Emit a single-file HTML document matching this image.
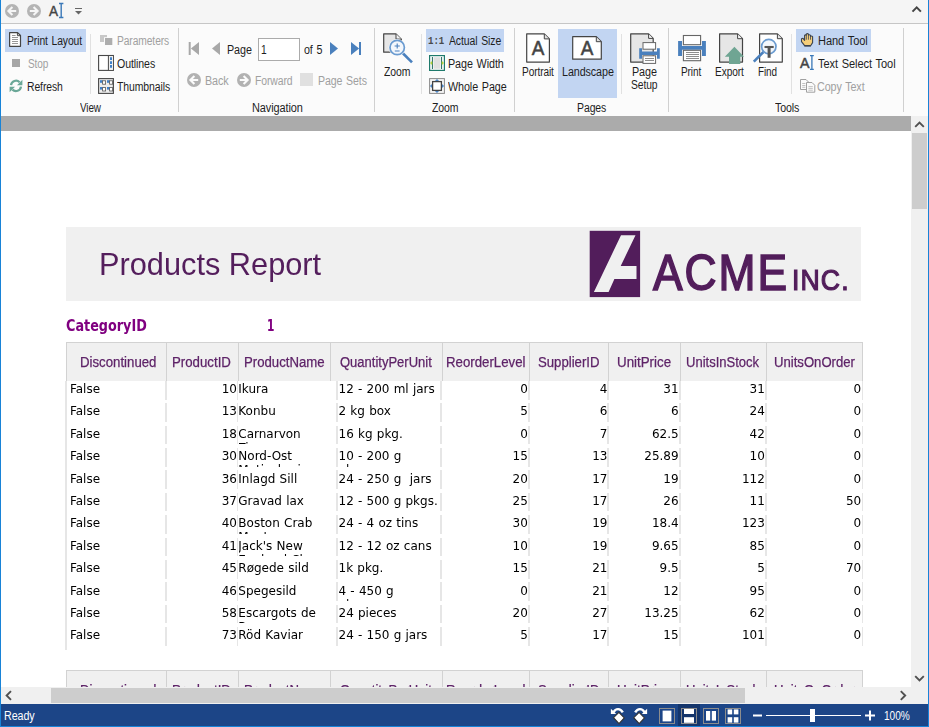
<!DOCTYPE html>
<html lang="en"><head><meta charset="utf-8"><title>Products Report</title>
<style>
*{box-sizing:border-box;margin:0;padding:0}
html,body{width:929px;height:727px;overflow:hidden;background:#fff}
body{font-family:"Liberation Sans",sans-serif;font-size:11px;color:#1e1e1e}
#win{position:absolute;left:0;top:0;width:929px;height:727px;overflow:hidden;background:#fff}
#win div,#win svg,#win span{position:absolute}
.edgeL{left:0;top:0;width:1px;height:727px;background:#1883d7}
.edgeR{left:928px;top:0;width:1px;height:727px;background:#1883d7}
.edgeB{left:0;top:726px;width:929px;height:1px;background:#1883d7}
#title{left:0;top:0;width:929px;height:23px;background:#f5f5f5}
#tline{left:0;top:23px;width:929px;height:1px;background:#c6c6c6}
#ribbon{left:0;top:24px;width:929px;height:92px;background:#fbfbfb}
.t{white-space:nowrap;line-height:14px;color:#1e1e1e;transform-origin:0 0}
.t.g{color:#a0a0a0}
.hl{background:#c2d5f2}
.sep{width:1px;background:#d0d0d0;top:28px;height:84px}
.isep{width:1px;background:#e1e1e1;top:34px;height:60px}
#gbar{left:0;top:116px;width:911px;height:15px;background:#ababab}
#view{left:1px;top:131px;width:910px;height:556px;background:#fff;overflow:hidden}
#page{left:-1px;top:-131px;width:929px;height:727px;will-change:transform}
.band{left:66px;top:227px;width:795px;height:74px;background:#f0f0f0}
.t.ttl{color:#541e5c}
.t.lg{color:#521d5b}
.logo{left:0;top:0}
.t.cat{font-family:"DejaVu Sans Condensed","DejaVu Sans","Liberation Sans",sans-serif;font-weight:bold;color:#800080}
.th{background:#f0f0f0;border:1px solid #d2d2d2;border-bottom:0}
.t.ht{color:#5e2368;-webkit-text-stroke:.25px #5e2368}
.tr{left:0;width:929px;height:18.7px}
.td{top:0;height:18.7px;border-left:1px solid #e6e6e6;border-right:1px solid #e6e6e6;overflow:hidden}
.d{font-family:"DejaVu Sans","Liberation Sans",sans-serif;font-size:12px;line-height:14px;word-spacing:.4px;color:#000;white-space:nowrap}
.tbl{left:65px;top:381px;width:2px;height:268.5px;background:#e6e6e6}
#vsb{left:911px;top:116px;width:17px;height:571px;background:#f0f0f0}
#hsb{left:1px;top:687px;width:910px;height:17px;background:#f0f0f0}
#corner{left:911px;top:687px;width:17px;height:17px;background:#f0f0f0}
.thumb{background:#cdcdcd}
#status{left:0;top:704px;width:929px;height:23px;background:#1c4587}
.t.wh{color:#fff}
svg{overflow:visible}

</style></head>
<body>
<div id="win">
<div id="view">
<div id="page">
<div class="band"></div>
<div class="t ttl" style="left:98.88px;top:245.00px;letter-spacing:0px;word-spacing:0px;font-size:31.5px;line-height:38px;transform:scaleX(0.9759);">Products Report</div>
<svg style="left:589px;top:230px" width="52" height="68" viewBox="589 230 52 68"><rect x="589.7" y="230.8" width="50.4" height="66.3" fill="#521d5b"/><path d="M621 235.3H635.5L620.7 265.9H636.5V279H614.4L608.6 292.1H593.9Z" fill="#f0f0f0"/></svg>
<div class="logo"><div class="t lg" style="left:652.71px;top:241.60px;letter-spacing:2.2px;word-spacing:0px;font-size:50.6px;line-height:61px;transform:scaleX(0.8774);-webkit-text-stroke:1.6px #521d5b">ACME</div><div class="t lg" style="left:791.55px;top:261.70px;letter-spacing:1.2px;word-spacing:0px;font-size:29.3px;line-height:35px;transform:scaleX(0.9096);-webkit-text-stroke:1.2px #521d5b">INC.</div></div>
<div class="t cat" style="left:65.67px;top:317.00px;letter-spacing:0px;word-spacing:0px;font-size:15px;line-height:18px;transform:scaleX(0.9478);">CategoryID</div>
<div class="t cat" style="left:266.80px;top:317.00px;letter-spacing:0px;word-spacing:0px;font-size:15px;line-height:18px;transform:scaleX(0.7902);">1</div>
<div class="tbl"></div>

<div class="th" style="left:66px;top:341.5px;width:101px;height:39px"></div>
<div class="th" style="left:166px;top:341.5px;width:73px;height:39px"></div>
<div class="th" style="left:238px;top:341.5px;width:93px;height:39px"></div>
<div class="th" style="left:330px;top:341.5px;width:113px;height:39px"></div>
<div class="th" style="left:442px;top:341.5px;width:88px;height:39px"></div>
<div class="th" style="left:529px;top:341.5px;width:80px;height:39px"></div>
<div class="th" style="left:608px;top:341.5px;width:73px;height:39px"></div>
<div class="th" style="left:680px;top:341.5px;width:87px;height:39px"></div>
<div class="th" style="left:766px;top:341.5px;width:97px;height:39px"></div>
<div class="t ht" style="left:79.82px;top:354.20px;letter-spacing:0px;word-spacing:0px;font-size:14px;line-height:16px;transform:scaleX(0.9444);">Discontinued</div>
<div class="t ht" style="left:172.41px;top:354.20px;letter-spacing:0px;word-spacing:0px;font-size:14px;line-height:16px;transform:scaleX(0.9464);">ProductID</div>
<div class="t ht" style="left:243.52px;top:354.20px;letter-spacing:0px;word-spacing:0px;font-size:14px;line-height:16px;transform:scaleX(0.9424);">ProductName</div>
<div class="t ht" style="left:340.29px;top:354.20px;letter-spacing:0px;word-spacing:0px;font-size:14px;line-height:16px;transform:scaleX(0.9289);">QuantityPerUnit</div>
<div class="t ht" style="left:445.71px;top:354.20px;letter-spacing:0px;word-spacing:0px;font-size:14px;line-height:16px;transform:scaleX(0.9455);">ReorderLevel</div>
<div class="t ht" style="left:538.11px;top:354.20px;letter-spacing:0px;word-spacing:0px;font-size:14px;line-height:16px;transform:scaleX(0.9410);">SupplierID</div>
<div class="t ht" style="left:616.97px;top:354.20px;letter-spacing:0px;word-spacing:0px;font-size:14px;line-height:16px;transform:scaleX(0.9527);">UnitPrice</div>
<div class="t ht" style="left:685.80px;top:354.20px;letter-spacing:0px;word-spacing:0px;font-size:14px;line-height:16px;transform:scaleX(0.9299);">UnitsInStock</div>
<div class="t ht" style="left:773.79px;top:354.20px;letter-spacing:0px;word-spacing:0px;font-size:14px;line-height:16px;transform:scaleX(0.9371);">UnitsOnOrder</div>
<div class="tr" style="top:381.00px">
<div class="td" style="left:66px;width:100px"><span class="d" style="left:2.90px;top:1.02px">False</span></div>
<div class="td" style="left:166px;width:72px"><span class="d" style="left:54.73px;top:1.02px">10</span></div>
<div class="td" style="left:238px;width:99px;border-left-color:transparent"><span class="d" style="left:-0.70px;top:1.02px">Ikura</span></div>
<div class="td" style="left:337px;width:104px"><span class="d" style="left:0.50px;top:1.02px">12 - 200 ml jars</span></div>
<div class="td" style="left:441px;width:88px"><span class="d" style="left:78.17px;top:1.02px">0</span></div>
<div class="td" style="left:529px;width:79px"><span class="d" style="left:69.87px;top:1.02px">4</span></div>
<div class="td" style="left:608px;width:72px"><span class="d" style="left:54.33px;top:1.02px">31</span></div>
<div class="td" style="left:680px;width:86px"><span class="d" style="left:68.53px;top:1.02px">31</span></div>
<div class="td" style="left:766px;width:96.5px"><span class="d" style="left:86.57px;top:1.02px">0</span></div>
</div>
<div class="tr" style="top:403.36px">
<div class="td" style="left:66px;width:100px"><span class="d" style="left:2.90px;top:0.66px">False</span></div>
<div class="td" style="left:166px;width:72px"><span class="d" style="left:54.73px;top:0.66px">13</span></div>
<div class="td" style="left:238px;width:99px;border-left-color:transparent"><span class="d" style="left:-0.70px;top:0.66px">Konbu</span></div>
<div class="td" style="left:337px;width:104px"><span class="d" style="left:0.50px;top:0.66px">2 kg box</span></div>
<div class="td" style="left:441px;width:88px"><span class="d" style="left:78.17px;top:0.66px">5</span></div>
<div class="td" style="left:529px;width:79px"><span class="d" style="left:69.87px;top:0.66px">6</span></div>
<div class="td" style="left:608px;width:72px"><span class="d" style="left:61.97px;top:0.66px">6</span></div>
<div class="td" style="left:680px;width:86px"><span class="d" style="left:68.53px;top:0.66px">24</span></div>
<div class="td" style="left:766px;width:96.5px"><span class="d" style="left:86.57px;top:0.66px">0</span></div>
</div>
<div class="tr" style="top:425.72px">
<div class="td" style="left:66px;width:100px"><span class="d" style="left:2.90px;top:1.30px">False</span></div>
<div class="td" style="left:166px;width:72px"><span class="d" style="left:54.73px;top:1.30px">18</span></div>
<div class="td" style="left:238px;width:99px;border-left-color:transparent"><span class="d" style="left:-0.70px;top:1.30px">Carnarvon</span><span class="d" style="left:-0.70px;top:15.30px">Tigers</span></div>
<div class="td" style="left:337px;width:104px"><span class="d" style="left:0.50px;top:1.30px">16 kg pkg.</span></div>
<div class="td" style="left:441px;width:88px"><span class="d" style="left:78.17px;top:1.30px">0</span></div>
<div class="td" style="left:529px;width:79px"><span class="d" style="left:69.87px;top:1.30px">7</span></div>
<div class="td" style="left:608px;width:72px"><span class="d" style="left:42.88px;top:1.30px">62.5</span></div>
<div class="td" style="left:680px;width:86px"><span class="d" style="left:68.53px;top:1.30px">42</span></div>
<div class="td" style="left:766px;width:96.5px"><span class="d" style="left:86.57px;top:1.30px">0</span></div>
</div>
<div class="tr" style="top:448.08px">
<div class="td" style="left:66px;width:100px"><span class="d" style="left:2.90px;top:0.94px">False</span></div>
<div class="td" style="left:166px;width:72px"><span class="d" style="left:54.73px;top:0.94px">30</span></div>
<div class="td" style="left:238px;width:99px;border-left-color:transparent"><span class="d" style="left:-0.70px;top:0.94px">Nord-Ost</span><span class="d" style="left:-0.70px;top:14.94px">Matjeshering</span></div>
<div class="td" style="left:337px;width:104px"><span class="d" style="left:0.50px;top:0.94px">10 - 200 g</span><span class="d" style="left:0.50px;top:14.94px">glasses</span></div>
<div class="td" style="left:441px;width:88px"><span class="d" style="left:70.53px;top:0.94px">15</span></div>
<div class="td" style="left:529px;width:79px"><span class="d" style="left:62.23px;top:0.94px">13</span></div>
<div class="td" style="left:608px;width:72px"><span class="d" style="left:35.25px;top:0.94px">25.89</span></div>
<div class="td" style="left:680px;width:86px"><span class="d" style="left:68.53px;top:0.94px">10</span></div>
<div class="td" style="left:766px;width:96.5px"><span class="d" style="left:86.57px;top:0.94px">0</span></div>
</div>
<div class="tr" style="top:470.44px">
<div class="td" style="left:66px;width:100px"><span class="d" style="left:2.90px;top:1.58px">False</span></div>
<div class="td" style="left:166px;width:72px"><span class="d" style="left:54.73px;top:1.58px">36</span></div>
<div class="td" style="left:238px;width:99px;border-left-color:transparent"><span class="d" style="left:-0.70px;top:1.58px">Inlagd Sill</span></div>
<div class="td" style="left:337px;width:104px"><span class="d" style="left:0.50px;top:1.58px">24 - 250 g &nbsp;jars</span></div>
<div class="td" style="left:441px;width:88px"><span class="d" style="left:70.53px;top:1.58px">20</span></div>
<div class="td" style="left:529px;width:79px"><span class="d" style="left:62.23px;top:1.58px">17</span></div>
<div class="td" style="left:608px;width:72px"><span class="d" style="left:54.33px;top:1.58px">19</span></div>
<div class="td" style="left:680px;width:86px"><span class="d" style="left:60.90px;top:1.58px">112</span></div>
<div class="td" style="left:766px;width:96.5px"><span class="d" style="left:86.57px;top:1.58px">0</span></div>
</div>
<div class="tr" style="top:492.80px">
<div class="td" style="left:66px;width:100px"><span class="d" style="left:2.90px;top:1.22px">False</span></div>
<div class="td" style="left:166px;width:72px"><span class="d" style="left:54.73px;top:1.22px">37</span></div>
<div class="td" style="left:238px;width:99px;border-left-color:transparent"><span class="d" style="left:-0.70px;top:1.22px">Gravad lax</span></div>
<div class="td" style="left:337px;width:104px"><span class="d" style="left:0.50px;top:1.22px">12 - 500 g pkgs.</span></div>
<div class="td" style="left:441px;width:88px"><span class="d" style="left:70.53px;top:1.22px">25</span></div>
<div class="td" style="left:529px;width:79px"><span class="d" style="left:62.23px;top:1.22px">17</span></div>
<div class="td" style="left:608px;width:72px"><span class="d" style="left:54.33px;top:1.22px">26</span></div>
<div class="td" style="left:680px;width:86px"><span class="d" style="left:68.53px;top:1.22px">11</span></div>
<div class="td" style="left:766px;width:96.5px"><span class="d" style="left:78.93px;top:1.22px">50</span></div>
</div>
<div class="tr" style="top:515.16px">
<div class="td" style="left:66px;width:100px"><span class="d" style="left:2.90px;top:0.86px">False</span></div>
<div class="td" style="left:166px;width:72px"><span class="d" style="left:54.73px;top:0.86px">40</span></div>
<div class="td" style="left:238px;width:99px;border-left-color:transparent"><span class="d" style="left:-0.70px;top:0.86px">Boston Crab</span><span class="d" style="left:-0.70px;top:14.86px">Meat</span></div>
<div class="td" style="left:337px;width:104px"><span class="d" style="left:0.50px;top:0.86px">24 - 4 oz tins</span></div>
<div class="td" style="left:441px;width:88px"><span class="d" style="left:70.53px;top:0.86px">30</span></div>
<div class="td" style="left:529px;width:79px"><span class="d" style="left:62.23px;top:0.86px">19</span></div>
<div class="td" style="left:608px;width:72px"><span class="d" style="left:42.88px;top:0.86px">18.4</span></div>
<div class="td" style="left:680px;width:86px"><span class="d" style="left:60.90px;top:0.86px">123</span></div>
<div class="td" style="left:766px;width:96.5px"><span class="d" style="left:86.57px;top:0.86px">0</span></div>
</div>
<div class="tr" style="top:537.52px">
<div class="td" style="left:66px;width:100px"><span class="d" style="left:2.90px;top:1.50px">False</span></div>
<div class="td" style="left:166px;width:72px"><span class="d" style="left:54.73px;top:1.50px">41</span></div>
<div class="td" style="left:238px;width:99px;border-left-color:transparent"><span class="d" style="left:-0.70px;top:1.50px">Jack's New</span><span class="d" style="left:-0.70px;top:15.50px">England Clam</span></div>
<div class="td" style="left:337px;width:104px"><span class="d" style="left:0.50px;top:1.50px">12 - 12 oz cans</span></div>
<div class="td" style="left:441px;width:88px"><span class="d" style="left:70.53px;top:1.50px">10</span></div>
<div class="td" style="left:529px;width:79px"><span class="d" style="left:62.23px;top:1.50px">19</span></div>
<div class="td" style="left:608px;width:72px"><span class="d" style="left:42.88px;top:1.50px">9.65</span></div>
<div class="td" style="left:680px;width:86px"><span class="d" style="left:68.53px;top:1.50px">85</span></div>
<div class="td" style="left:766px;width:96.5px"><span class="d" style="left:86.57px;top:1.50px">0</span></div>
</div>
<div class="tr" style="top:559.88px">
<div class="td" style="left:66px;width:100px"><span class="d" style="left:2.90px;top:1.14px">False</span></div>
<div class="td" style="left:166px;width:72px"><span class="d" style="left:54.73px;top:1.14px">45</span></div>
<div class="td" style="left:238px;width:99px;border-left-color:transparent"><span class="d" style="left:-0.70px;top:1.14px">Røgede sild</span></div>
<div class="td" style="left:337px;width:104px"><span class="d" style="left:0.50px;top:1.14px">1k pkg.</span></div>
<div class="td" style="left:441px;width:88px"><span class="d" style="left:70.53px;top:1.14px">15</span></div>
<div class="td" style="left:529px;width:79px"><span class="d" style="left:62.23px;top:1.14px">21</span></div>
<div class="td" style="left:608px;width:72px"><span class="d" style="left:50.52px;top:1.14px">9.5</span></div>
<div class="td" style="left:680px;width:86px"><span class="d" style="left:76.17px;top:1.14px">5</span></div>
<div class="td" style="left:766px;width:96.5px"><span class="d" style="left:78.93px;top:1.14px">70</span></div>
</div>
<div class="tr" style="top:582.24px">
<div class="td" style="left:66px;width:100px"><span class="d" style="left:2.90px;top:1.78px">False</span></div>
<div class="td" style="left:166px;width:72px"><span class="d" style="left:54.73px;top:1.78px">46</span></div>
<div class="td" style="left:238px;width:99px;border-left-color:transparent"><span class="d" style="left:-0.70px;top:1.78px">Spegesild</span></div>
<div class="td" style="left:337px;width:104px"><span class="d" style="left:0.50px;top:1.78px">4 - 450 g</span><span class="d" style="left:0.50px;top:15.78px">glasses</span></div>
<div class="td" style="left:441px;width:88px"><span class="d" style="left:78.17px;top:1.78px">0</span></div>
<div class="td" style="left:529px;width:79px"><span class="d" style="left:62.23px;top:1.78px">21</span></div>
<div class="td" style="left:608px;width:72px"><span class="d" style="left:54.33px;top:1.78px">12</span></div>
<div class="td" style="left:680px;width:86px"><span class="d" style="left:68.53px;top:1.78px">95</span></div>
<div class="td" style="left:766px;width:96.5px"><span class="d" style="left:86.57px;top:1.78px">0</span></div>
</div>
<div class="tr" style="top:604.60px">
<div class="td" style="left:66px;width:100px"><span class="d" style="left:2.90px;top:1.42px">False</span></div>
<div class="td" style="left:166px;width:72px"><span class="d" style="left:54.73px;top:1.42px">58</span></div>
<div class="td" style="left:238px;width:99px;border-left-color:transparent"><span class="d" style="left:-0.70px;top:1.42px">Escargots de</span><span class="d" style="left:-0.70px;top:15.42px">Bourgogne</span></div>
<div class="td" style="left:337px;width:104px"><span class="d" style="left:0.50px;top:1.42px">24 pieces</span></div>
<div class="td" style="left:441px;width:88px"><span class="d" style="left:70.53px;top:1.42px">20</span></div>
<div class="td" style="left:529px;width:79px"><span class="d" style="left:62.23px;top:1.42px">27</span></div>
<div class="td" style="left:608px;width:72px"><span class="d" style="left:35.25px;top:1.42px">13.25</span></div>
<div class="td" style="left:680px;width:86px"><span class="d" style="left:68.53px;top:1.42px">62</span></div>
<div class="td" style="left:766px;width:96.5px"><span class="d" style="left:86.57px;top:1.42px">0</span></div>
</div>
<div class="tr" style="top:626.96px">
<div class="td" style="left:66px;width:100px"><span class="d" style="left:2.90px;top:1.06px">False</span></div>
<div class="td" style="left:166px;width:72px"><span class="d" style="left:54.73px;top:1.06px">73</span></div>
<div class="td" style="left:238px;width:99px;border-left-color:transparent"><span class="d" style="left:-0.70px;top:1.06px">Röd Kaviar</span></div>
<div class="td" style="left:337px;width:104px"><span class="d" style="left:0.50px;top:1.06px">24 - 150 g jars</span></div>
<div class="td" style="left:441px;width:88px"><span class="d" style="left:78.17px;top:1.06px">5</span></div>
<div class="td" style="left:529px;width:79px"><span class="d" style="left:62.23px;top:1.06px">17</span></div>
<div class="td" style="left:608px;width:72px"><span class="d" style="left:54.33px;top:1.06px">15</span></div>
<div class="td" style="left:680px;width:86px"><span class="d" style="left:60.90px;top:1.06px">101</span></div>
<div class="td" style="left:766px;width:96.5px"><span class="d" style="left:86.57px;top:1.06px">0</span></div>
</div>
<div class="th" style="left:66px;top:669.7px;width:101px;height:39px"></div>
<div class="th" style="left:166px;top:669.7px;width:73px;height:39px"></div>
<div class="th" style="left:238px;top:669.7px;width:93px;height:39px"></div>
<div class="th" style="left:330px;top:669.7px;width:113px;height:39px"></div>
<div class="th" style="left:442px;top:669.7px;width:88px;height:39px"></div>
<div class="th" style="left:529px;top:669.7px;width:80px;height:39px"></div>
<div class="th" style="left:608px;top:669.7px;width:73px;height:39px"></div>
<div class="th" style="left:680px;top:669.7px;width:87px;height:39px"></div>
<div class="th" style="left:766px;top:669.7px;width:97px;height:39px"></div>
<div class="t ht" style="left:79.82px;top:682.40px;letter-spacing:0px;word-spacing:0px;font-size:14px;line-height:16px;transform:scaleX(0.9444);">Discontinued</div>
<div class="t ht" style="left:172.41px;top:682.40px;letter-spacing:0px;word-spacing:0px;font-size:14px;line-height:16px;transform:scaleX(0.9464);">ProductID</div>
<div class="t ht" style="left:243.52px;top:682.40px;letter-spacing:0px;word-spacing:0px;font-size:14px;line-height:16px;transform:scaleX(0.9424);">ProductName</div>
<div class="t ht" style="left:340.29px;top:682.40px;letter-spacing:0px;word-spacing:0px;font-size:14px;line-height:16px;transform:scaleX(0.9289);">QuantityPerUnit</div>
<div class="t ht" style="left:445.71px;top:682.40px;letter-spacing:0px;word-spacing:0px;font-size:14px;line-height:16px;transform:scaleX(0.9455);">ReorderLevel</div>
<div class="t ht" style="left:538.11px;top:682.40px;letter-spacing:0px;word-spacing:0px;font-size:14px;line-height:16px;transform:scaleX(0.9410);">SupplierID</div>
<div class="t ht" style="left:616.97px;top:682.40px;letter-spacing:0px;word-spacing:0px;font-size:14px;line-height:16px;transform:scaleX(0.9527);">UnitPrice</div>
<div class="t ht" style="left:685.80px;top:682.40px;letter-spacing:0px;word-spacing:0px;font-size:14px;line-height:16px;transform:scaleX(0.9299);">UnitsInStock</div>
<div class="t ht" style="left:773.79px;top:682.40px;letter-spacing:0px;word-spacing:0px;font-size:14px;line-height:16px;transform:scaleX(0.9371);">UnitsOnOrder</div>
</div>
</div>
<div id="title"></div>
<div id="tline"></div>
<div id="ribbon"></div>
<div id="gbar"></div>
<!-- title bar -->
<svg style="left:5px;top:4px" width="14" height="14" viewBox="0 0 14 14"><circle cx="7" cy="7" r="7" fill="#b4b4b4"/><path d="M7.4 3 L3.4 7 L7.4 11 M3.8 7 H11.2" fill="none" stroke="#f5f5f5" stroke-width="2.1"/></svg>
<svg style="left:27px;top:4px" width="14" height="14" viewBox="0 0 14 14"><circle cx="7" cy="7" r="7" fill="#b4b4b4"/><path d="M6.6 3 L10.6 7 L6.6 11 M10.2 7 H2.8" fill="none" stroke="#f5f5f5" stroke-width="2.1"/></svg>
<div class="t k" style="left:49.27px;top:1.50px;letter-spacing:0px;word-spacing:1.0px;font-size:15px;line-height:18px;transform:scaleX(0.9050);color:#444;-webkit-text-stroke:.4px #444">A</div>
<svg style="left:59px;top:3px" width="5" height="15" viewBox="0 0 5 15"><path d="M0 .5H4.4M0 14.5H4.4M2.2 0V15" fill="none" stroke="#3a78b8" stroke-width="1.4"/></svg>
<div style="left:75px;top:8px;width:7px;height:1px;background:#666"></div>
<svg style="left:75px;top:11px" width="7" height="4" viewBox="0 0 7 4"><path d="M0 0H7L3.5 3.5Z" fill="#666"/></svg>
<svg style="left:910px;top:4px" width="14" height="12" viewBox="910 4 14 12"><path d="M912.5 11.6L916.7 7.4L920.9 11.6" fill="none" stroke="#444" stroke-width="2"/></svg>
<!-- View -->
<div class="hl" style="left:5px;top:29px;width:81px;height:23px"></div>
<div class="t " style="left:27.15px;top:34.00px;letter-spacing:-0.1px;word-spacing:1.0px;font-size:12px;line-height:14px;transform:scaleX(0.8620);">Print Layout</div>
<div class="t g" style="left:27.55px;top:57.00px;letter-spacing:-0.1px;word-spacing:1.0px;font-size:12px;line-height:14px;transform:scaleX(0.8350);">Stop</div>
<div class="t " style="left:27.45px;top:80.00px;letter-spacing:-0.1px;word-spacing:1.0px;font-size:12px;line-height:14px;transform:scaleX(0.8649);">Refresh</div>
<div class="isep" style="left:90px"></div>
<div class="t g" style="left:117.36px;top:34.00px;letter-spacing:-0.1px;word-spacing:1.0px;font-size:12px;line-height:14px;transform:scaleX(0.8541);">Parameters</div>
<div class="t " style="left:116.50px;top:57.00px;letter-spacing:-0.1px;word-spacing:1.0px;font-size:12px;line-height:14px;transform:scaleX(0.8814);">Outlines</div>
<div class="t " style="left:116.87px;top:80.00px;letter-spacing:-0.1px;word-spacing:1.0px;font-size:12px;line-height:14px;transform:scaleX(0.8687);">Thumbnails</div>
<div class="t " style="left:79.96px;top:101.00px;letter-spacing:-0.1px;word-spacing:1.0px;font-size:12px;line-height:14px;transform:scaleX(0.8243);">View</div>
<div class="sep" style="left:178px"></div>
<!-- Navigation -->
<div class="t " style="left:227.02px;top:43.00px;letter-spacing:-0.1px;word-spacing:1.0px;font-size:12px;line-height:14px;transform:scaleX(0.8967);">Page</div>
<div style="left:258px;top:38px;width:42px;height:23px;background:#fff;border:1px solid #ababab"></div>
<div class="t " style="left:261.43px;top:43.00px;letter-spacing:-0.1px;word-spacing:1.0px;font-size:12px;line-height:14px;transform:scaleX(0.8488);">1</div>
<div class="t " style="left:303.95px;top:43.00px;letter-spacing:-0.1px;word-spacing:1.0px;font-size:12px;line-height:14px;transform:scaleX(0.8925);">of 5</div>
<div class="t g" style="left:205.32px;top:74.00px;letter-spacing:-0.1px;word-spacing:1.0px;font-size:12px;line-height:14px;transform:scaleX(0.8971);">Back</div>
<div class="t g" style="left:255.05px;top:74.00px;letter-spacing:-0.1px;word-spacing:1.0px;font-size:12px;line-height:14px;transform:scaleX(0.8667);">Forward</div>
<div class="t g" style="left:317.73px;top:74.00px;letter-spacing:-0.1px;word-spacing:1.0px;font-size:12px;line-height:14px;transform:scaleX(0.8809);">Page Sets</div>
<div class="t " style="left:252.20px;top:101.00px;letter-spacing:-0.1px;word-spacing:1.0px;font-size:12px;line-height:14px;transform:scaleX(0.9122);">Navigation</div>
<div class="sep" style="left:374px"></div>
<!-- Zoom -->
<div class="t " style="left:384.48px;top:65.00px;letter-spacing:-0.1px;word-spacing:1.0px;font-size:12px;line-height:14px;transform:scaleX(0.8693);">Zoom</div>
<div class="isep" style="left:421px"></div>
<div class="hl" style="left:426px;top:29px;width:78px;height:23px"></div>
<div class="t k" style="left:428.29px;top:34.00px;letter-spacing:0px;word-spacing:1.0px;font-size:10.6px;line-height:14px;transform:scaleX(0.8536);font-family:&quot;Liberation Mono&quot;,monospace;font-weight:bold;color:#484848">1:1</div>
<div class="t " style="left:448.68px;top:34.00px;letter-spacing:-0.1px;word-spacing:1.0px;font-size:12px;line-height:14px;transform:scaleX(0.8693);">Actual Size</div>
<div class="t " style="left:448.02px;top:57.00px;letter-spacing:-0.1px;word-spacing:1.0px;font-size:12px;line-height:14px;transform:scaleX(0.8977);">Page Width</div>
<div class="t " style="left:448.36px;top:80.00px;letter-spacing:-0.1px;word-spacing:1.0px;font-size:12px;line-height:14px;transform:scaleX(0.8968);">Whole Page</div>
<div class="t " style="left:432.38px;top:101.00px;letter-spacing:-0.1px;word-spacing:1.0px;font-size:12px;line-height:14px;transform:scaleX(0.8727);">Zoom</div>
<div class="sep" style="left:514px"></div>
<!-- Pages -->
<div class="t " style="left:522.37px;top:65.00px;letter-spacing:-0.1px;word-spacing:1.0px;font-size:12px;line-height:14px;transform:scaleX(0.8399);">Portrait</div>
<div class="hl" style="left:558px;top:29px;width:59px;height:69px"></div>
<div class="t " style="left:561.52px;top:65.00px;letter-spacing:-0.1px;word-spacing:1.0px;font-size:12px;line-height:14px;transform:scaleX(0.8953);">Landscape</div>
<div class="isep" style="left:621px"></div>
<div class="t " style="left:631.91px;top:65.00px;letter-spacing:-0.1px;word-spacing:1.0px;font-size:12px;line-height:14px;transform:scaleX(0.9005);">Page</div>
<div class="t " style="left:631.34px;top:78.00px;letter-spacing:-0.1px;word-spacing:1.0px;font-size:12px;line-height:14px;transform:scaleX(0.8588);">Setup</div>
<div class="t " style="left:577.24px;top:101.00px;letter-spacing:-0.1px;word-spacing:1.0px;font-size:12px;line-height:14px;transform:scaleX(0.8726);">Pages</div>
<div class="sep" style="left:668px"></div>
<!-- Tools -->
<div class="t " style="left:681.18px;top:65.00px;letter-spacing:-0.1px;word-spacing:1.0px;font-size:12px;line-height:14px;transform:scaleX(0.8318);">Print</div>
<div class="t " style="left:715.37px;top:65.00px;letter-spacing:-0.1px;word-spacing:1.0px;font-size:12px;line-height:14px;transform:scaleX(0.8426);">Export</div>
<div class="t " style="left:758.49px;top:65.00px;letter-spacing:-0.1px;word-spacing:1.0px;font-size:12px;line-height:14px;transform:scaleX(0.8268);">Find</div>
<div class="isep" style="left:791px"></div>
<div class="hl" style="left:796px;top:29px;width:75px;height:23px"></div>
<div class="t " style="left:818.29px;top:34.00px;letter-spacing:-0.1px;word-spacing:1.0px;font-size:12px;line-height:14px;transform:scaleX(0.9207);">Hand Tool</div>
<div class="t " style="left:818.06px;top:57.00px;letter-spacing:-0.1px;word-spacing:1.0px;font-size:12px;line-height:14px;transform:scaleX(0.9200);">Text Select Tool</div>
<div class="t g" style="left:817.46px;top:80.00px;letter-spacing:-0.1px;word-spacing:1.0px;font-size:12px;line-height:14px;transform:scaleX(0.8927);">Copy Text</div>
<div class="t " style="left:775.37px;top:101.00px;letter-spacing:-0.1px;word-spacing:1.0px;font-size:12px;line-height:14px;transform:scaleX(0.8844);">Tools</div>
<div class="sep" style="left:903px"></div>
<svg style="left:0;top:0" width="929" height="116" viewBox="0 0 929 116" font-family="Liberation Sans, sans-serif">
<!-- print layout -->
<g>
<path d="M9.6 32.6H17.6L20.5 35.5V46.3H9.6Z" fill="#fff" stroke="#444" stroke-width="1.2" stroke-linejoin="round"/>
<path d="M17.4 32.8V35.7H20.3" fill="none" stroke="#444" stroke-width="1"/>
<path d="M12 35.5H15.6M12 37.5H18M12 39.5H18M12 41.5H18M12 43.5H18" stroke="#8c8c8c" stroke-width=".9" fill="none"/>
</g>
<!-- stop -->
<rect x="12" y="59" width="8" height="8" fill="#a6a6a6"/>
<!-- refresh -->
<g fill="none" stroke="#6aa797" stroke-width="2.2">
<path d="M11 85.2A5.1 5.1 0 0 1 19.6 82.2"/>
<path d="M21 86.6A5.1 5.1 0 0 1 12.4 89.6"/>
</g>
<path d="M22.4 79.8V85.2H17z" fill="#6aa797"/>
<path d="M9.6 92.2V86.8H15z" fill="#6aa797"/>
<!-- parameters -->
<rect x="100" y="35" width="7" height="7" fill="#c8c8c8"/>
<rect x="104" y="37.2" width="8.6" height="8" fill="#fbfbfb"/>
<rect x="105" y="38" width="7.3" height="7" fill="#adadad"/>
<!-- outlines -->
<rect x="98.6" y="55.5" width="14.8" height="14.9" fill="#fff" stroke="#484848" stroke-width="1.1"/>
<rect x="108.9" y="56" width="4" height="14" fill="#efefef"/>
<path d="M108.4 55.5V70.4" stroke="#484848" stroke-width="1"/>
<path d="M110 57.2h2v2.7h-2zM110 61.2h2v2.7h-2zM110 65.1h2v2.7h-2z" fill="#3f7fc8"/>
<!-- thumbnails -->
<rect x="98.6" y="78.6" width="14.8" height="14.8" fill="#ececec" stroke="#484848" stroke-width="1.1"/>
<g id="thb">
<rect x="100" y="80.2" width="2.9" height="2.6" fill="#3f7fc8"/>
<rect x="102.6" y="80.8" width="3" height="3.4" fill="#fff" stroke="#555" stroke-width=".8"/>
</g>
<g transform="translate(7 0)"><rect x="100" y="80.2" width="2.9" height="2.6" fill="#3f7fc8"/><rect x="102.6" y="80.8" width="3" height="3.4" fill="#fff" stroke="#555" stroke-width=".8"/></g>
<g transform="translate(0 6.8)"><rect x="100" y="80.2" width="2.9" height="2.6" fill="#3f7fc8"/><rect x="102.6" y="80.8" width="3" height="3.4" fill="#fff" stroke="#555" stroke-width=".8"/></g>
<g transform="translate(7 6.8)"><rect x="100" y="80.2" width="2.9" height="2.6" fill="#3f7fc8"/><rect x="102.6" y="80.8" width="3" height="3.4" fill="#fff" stroke="#555" stroke-width=".8"/></g>
<!-- nav arrows -->
<path d="M188.7 42h2v13h-2zM199 42V55L190.9 48.5z" fill="#a8a8a8"/>
<path d="M220 42V55L212 48.5z" fill="#a8a8a8"/>
<path d="M330 42V55L338 48.5z" fill="#4a80bd"/>
<path d="M351 42V55L359.1 48.5zM359 42h2v13h-2z" fill="#4a80bd"/>
<!-- back / forward -->
<circle cx="194" cy="80" r="7" fill="#b2b2b2"/>
<path d="M194.4 76L190.4 80L194.4 84M190.8 80H198.2" fill="none" stroke="#fbfbfb" stroke-width="2.1"/>
<circle cx="244" cy="80" r="7" fill="#b2b2b2"/>
<path d="M243.6 76L247.6 80L243.6 84M247.2 80H239.8" fill="none" stroke="#fbfbfb" stroke-width="2.1"/>
<rect x="300" y="73" width="13" height="13" fill="#e0e0e0"/>
<!-- zoom big -->
<path d="M383.7 33.8H396L401.3 39.1V52.2H383.7Z" fill="#e6e6e6" stroke="#444" stroke-width="1.2" stroke-linejoin="round"/>
<path d="M396 34V39.1H401.2" fill="#f4f4f4" stroke="#444" stroke-width="1"/>
<path d="M402.6 53L412 62.4" stroke="#4a80bd" stroke-width="2.6" fill="none"/>
<circle cx="397.2" cy="47.5" r="8.6" fill="#fbfbfb"/>
<circle cx="397.2" cy="47.5" r="7.2" fill="#f3f7fc" stroke="#6a9bd0" stroke-width="1.7"/>
<path d="M394.6 46H399.8M397.2 43.4V48.6M394.8 51H399.6" stroke="#4a80bd" stroke-width="1.1" fill="none"/>
<!-- page width -->
<rect x="429.6" y="55.6" width="14.8" height="14.8" fill="#fff" stroke="#1f7a6c" stroke-width="1.2"/>
<rect x="433.5" y="57.2" width="7" height="11.6" fill="#e0e0e0"/>
<path d="M432.4 57V69M441.6 57V69" stroke="#1f6a5e" stroke-width="1"/>
<path d="M430.4 63L432 61.6V64.4zM443.6 63L442 61.6V64.4z" fill="#b5d334" stroke="#b5d334" stroke-width=".6"/>
<!-- whole page -->
<rect x="429.6" y="78.6" width="14.8" height="14.8" fill="#f6f6f6" stroke="#8a8a8a" stroke-width="1"/>
<path d="M437 78.9L440.6 82.6H433.4zM437 93.1L440.6 89.4H433.4zM429.9 86L433.6 82.4V89.6zM444.1 86L440.4 82.4V89.6z" fill="#4a86c8"/>
<rect x="432.6" y="81.6" width="8.8" height="8.8" fill="#fff" stroke="#444" stroke-width="1.3"/>
<!-- portrait -->
<path d="M526.7 33.8H544.3L549.4 38.9V62.1H526.7Z" fill="#fff" stroke="#444" stroke-width="1.2" stroke-linejoin="round"/>
<path d="M544.3 34V38.9H549.2" fill="#e0e0e0" stroke="#444" stroke-width="1"/>
<text x="538.1" y="55.2" font-size="20" text-anchor="middle" fill="#444" stroke="#444" stroke-width=".5" textLength="12.6" lengthAdjust="spacingAndGlyphs">A</text>
<!-- landscape -->
<path d="M572.7 36.7H596.3L601.3 41.7V59.2H572.7Z" fill="#fff" stroke="#444" stroke-width="1.2" stroke-linejoin="round"/>
<path d="M596.3 36.9V41.7H601.1" fill="#e0e0e0" stroke="#444" stroke-width="1"/>
<text x="587.1" y="55.2" font-size="20" text-anchor="middle" fill="#444" stroke="#444" stroke-width=".5" textLength="12.6" lengthAdjust="spacingAndGlyphs">A</text>
<!-- page setup -->
<path d="M630.7 33.8H648.6L653.2 38.4V62.1H630.7Z" fill="#e6e6e6" stroke="#444" stroke-width="1.2" stroke-linejoin="round"/>
<path d="M648.6 34V38.4H653" fill="#f6f6f6" stroke="#444" stroke-width="1"/>
<path d="M639.2 48.2h2.8v10.6h-2.8zM657 48.2h2.8v10.6H657zM641 51.5h17v3.4h-17z" fill="#4a80bd"/>
<rect x="643" y="42.6" width="12.6" height="6.6" fill="#fff" stroke="#666" stroke-width="1"/>
<rect x="643" y="55.8" width="12.6" height="7.6" fill="#fff" stroke="#666" stroke-width="1"/>
<path d="M645 58.5H654M645 60.5H654" stroke="#8e8e8e" stroke-width="1" shape-rendering="crispEdges"/>
<!-- print -->
<path d="M678.1 41.1h3.9v14.8h-3.9zM702 41.1h3.9v14.8H702zM681 46h22v3.8h-22z" fill="#4a80bd"/>
<rect x="683.4" y="35.5" width="17.2" height="9.2" fill="#fff" stroke="#666" stroke-width="1.1"/>
<rect x="683.4" y="50.3" width="17.2" height="10.4" fill="#fff" stroke="#666" stroke-width="1.1"/>
<path d="M685.5 52.5H698.5M685.5 54.5H698.5M685.5 56.5H698.5M685.5 58.5H698.5" stroke="#8e8e8e" stroke-width="1" shape-rendering="crispEdges"/>
<!-- export -->
<path d="M719.6 33.8H737.6L742.5 38.7V62.1H719.6Z" fill="#e6e6e6" stroke="#444" stroke-width="1.2" stroke-linejoin="round"/>
<path d="M737.6 34V38.7H742.3" fill="#f6f6f6" stroke="#444" stroke-width="1"/>
<path d="M734.4 46.8L744 56.8H740.3V63.9H729V56.8H724.8Z" fill="#6fa593"/>
<!-- find -->
<path d="M759.6 33.8H777.4L782.3 38.7V62.1H759.6Z" fill="#fff" stroke="#444" stroke-width="1.2" stroke-linejoin="round"/>
<path d="M777.4 34V38.7H782.1" fill="#e6e6e6" stroke="#444" stroke-width="1"/>
<path d="M763.4 52L753.8 61.6" stroke="#4a80bd" stroke-width="2.6" fill="none"/>
<circle cx="768.8" cy="46.6" r="7.2" fill="#f3f7fc" stroke="#6a9bd0" stroke-width="1.7"/>
<path d="M764.5 47H773.7" stroke="#555" stroke-width="2.1" fill="none"/><path d="M769.1 47V57.8" stroke="#555" stroke-width="3" fill="none"/>
<!-- hand -->
<path d="M801.5 38.8L803 38.3L804.6 40.4V35.4Q805.4 34.3 806.3 35.4V34.2Q807.4 33 808.5 34.2V35.2Q809.5 34.3 810.5 35.3V36.4Q811.6 35.5 812.6 36.6V42.6L810.6 45.7H804.6L801.5 41.6Z" fill="#f5ce7a" stroke="#3c4450" stroke-width="1.1" stroke-linejoin="round"/>
<path d="M806.35 35.6V39.7M808.45 35.2V39.7M810.5 36.2V39.7" fill="none" stroke="#3c4450" stroke-width=".8"/>
<path d="M804.4 45.8H810.8" stroke="#3c4450" stroke-width="1.5"/>
<!-- text select -->
<text x="799.9" y="68" font-size="14.2" fill="#444" stroke="#444" stroke-width=".5">A</text>
<path d="M810 55.6H813.8M810 69.4H813.8M811.9 55.6V69.4" stroke="#3a78b8" stroke-width="1.3" fill="none"/>
<!-- copy -->
<path d="M800.5 79.5H806L808.5 82V89.5H800.5Z" fill="#fbfbfb" stroke="#a0a0a0" stroke-width="1"/>
<path d="M802.2 83.5H805.4M802.2 85.5H805.4M802.2 87.3H805.4" stroke="#b4b4b4" stroke-width=".8"/>
<path d="M806.5 82.5H812L814.8 85.3V92.2H806.5Z" fill="#fbfbfb" stroke="#a0a0a0" stroke-width="1"/>
<path d="M808.4 86.6H812.8M808.4 88.4H812.8M808.4 90.2H812.8" stroke="#b4b4b4" stroke-width=".8"/>
</svg>


<div id="vsb"><div class="thumb" style="left:1px;top:17px;width:15px;height:76px"></div>
<svg style="left:0;top:0" width="17" height="571" viewBox="0 0 17 571"><path d="M4.2 10.8L8.5 6.5L12.8 10.8" fill="none" stroke="#505050" stroke-width="1.9"/><path d="M4.2 560.2L8.5 564.5L12.8 560.2" fill="none" stroke="#505050" stroke-width="1.9"/></svg>
</div>
<div id="hsb"><div class="thumb" style="left:50px;top:1px;width:694px;height:15px"></div>
<svg style="left:0;top:0" width="910" height="17" viewBox="0 0 910 17"><path d="M10 4.1L5.6 8.5L10 12.9" fill="none" stroke="#505050" stroke-width="1.9"/><path d="M899.8 4.1L904.2 8.5L899.8 12.9" fill="none" stroke="#505050" stroke-width="1.9"/></svg>
</div>
<div id="corner"></div>
<div id="status"></div>
<div style="left:678px;top:704px;width:22px;height:22px;background:#14356b"></div>
<svg style="left:0;top:704px" width="929" height="23" viewBox="0 704 929 23">
<!-- rotate left -->
<g fill="#fff">
<path d="M613.6 712.2C615.6 708.2 620.4 708 622.8 712.4" fill="none" stroke="#fff" stroke-width="2.4"/>
<path d="M610.9 708.8V713.9H616.2Z"/>
<path d="M618.9 712.4L624.3 717.9L619 723.6L613.5 717.7Z" stroke="#333" stroke-width="1.1"/>
<path d="M644.4 712.2C642.4 708.2 637.6 708 635.2 712.4" fill="none" stroke="#fff" stroke-width="2.4"/>
<path d="M647.1 708.8V713.9H641.8Z"/>
<path d="M639.1 712.4L644.5 717.9L639.2 723.6L633.7 717.7Z" stroke="#333" stroke-width="1.1"/>
</g>
<g fill="none" stroke="#8d8d8d" stroke-width="1">
<rect x="659.5" y="708.5" width="15" height="15"/>
<rect x="681.5" y="708.5" width="15" height="15"/>
<rect x="703.5" y="708.5" width="15" height="15"/>
<rect x="725.5" y="708.5" width="15" height="15"/>
</g>
<g fill="#fff">
<rect x="662.6" y="710.6" width="8.8" height="10.8"/>
<rect x="684" y="709" width="10" height="5"/><rect x="684" y="717.2" width="10" height="5.6"/>
<rect x="706" y="711" width="4.2" height="9.6"/><rect x="711.8" y="711" width="4.2" height="9.6"/>
<rect x="727.6" y="709.4" width="4.6" height="5"/><rect x="733.8" y="709.4" width="4.6" height="5"/>
<rect x="727.6" y="717.2" width="4.6" height="5.4"/><rect x="733.8" y="717.2" width="4.6" height="5.4"/>
<rect x="753" y="714.5" width="9" height="2"/>
<rect x="766" y="715" width="95" height="1"/>
<rect x="810" y="709" width="5" height="13"/>
<rect x="865" y="714.5" width="10" height="2"/><rect x="869" y="710.5" width="2" height="10"/>
</g>
</svg>
<div class="t wh" style="left:4.32px;top:709.00px;letter-spacing:-0.1px;word-spacing:1.0px;font-size:12px;line-height:14px;transform:scaleX(0.8923);">Ready</div>
<div class="t wh" style="left:883.93px;top:709.00px;letter-spacing:-0.1px;word-spacing:1.0px;font-size:12px;line-height:14px;transform:scaleX(0.8468);">100%</div>
<div class="edgeL"></div><div class="edgeR"></div><div class="edgeB"></div>

</div>
</body></html>
